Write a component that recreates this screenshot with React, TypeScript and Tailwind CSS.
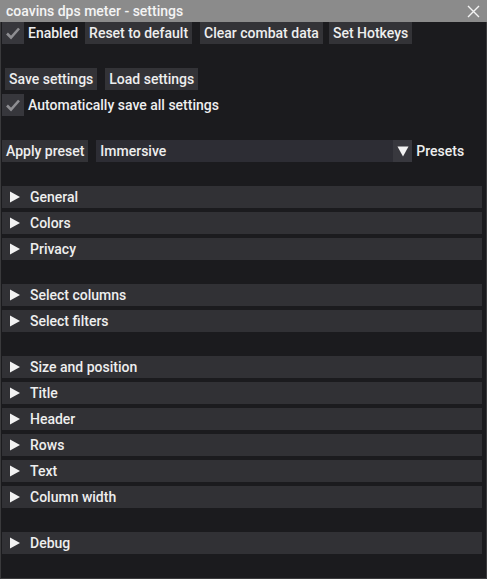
import React from "react";

const font = { fontFamily: "Roboto, 'Noto Sans', sans-serif" };

function Check() {
  return (
    <span className="w-[22px] h-[22px] bg-[#37373c] flex items-center justify-center shrink-0">
      <svg width="16" height="14" viewBox="0 0 16 14">
        <path d="M2 7.5 L6 11.5 L14 2.5" fill="none" stroke="#8e8e92" strokeWidth="2.6" />
      </svg>
    </span>
  );
}

function Btn({ children, className = "" }: { children: React.ReactNode; className?: string }) {
  return (
    <span className={`h-[22px] px-[4px] bg-[#333337] flex items-center whitespace-nowrap ${className}`}>
      {children}
    </span>
  );
}

function Header({ label }: { label: string }) {
  return (
    <div className="h-[22px] ml-[1px] mr-[4px] bg-[#313135] flex items-center">
      <svg width="12" height="12" viewBox="0 0 12 12" className="ml-[7px] mr-[9px]">
        <path d="M1 0.5 L11 6 L1 11.5 Z" fill="#f2f2f2" />
      </svg>
      <span>{label}</span>
    </div>
  );
}

const Spacer = () => <div className="h-4" />;

export default function App() {
  return (
    <div
      style={font}
      className="w-[487px] h-[579px] flex flex-col text-[14px] font-medium text-[#eeeeee] leading-none"
    >
      <div className="h-[22px] bg-[#8b8b8b] flex items-center justify-between pl-[6px] pr-[7px]">
        <span className="text-[#f4f4f4]">coavins dps meter - settings</span>
        <svg width="13" height="13" viewBox="0 0 13 13">
          <path d="M1 1 L12 12 M12 1 L1 12" stroke="#f4f4f4" strokeWidth="1.4" />
        </svg>
      </div>
      <div className="flex-1 bg-[#1b1b1e] border-x border-b border-[#3a3a3c] flex flex-col gap-1">
        <div className="flex items-center pl-[1px]">
          <Check />
          <span className="ml-[4px] mr-[7px]">Enabled</span>
          <Btn className="mr-[8px]">Reset to default</Btn>
          <Btn className="mr-[6px]">Clear combat data</Btn>
          <Btn>Set Hotkeys</Btn>
        </div>
        <Spacer />
        <div className="flex items-center pl-[4px]">
          <Btn className="mr-[8px]">Save settings</Btn>
          <Btn>Load settings</Btn>
        </div>
        <div className="flex items-center pl-[1px]">
          <Check />
          <span className="ml-[4px]">Automatically save all settings</span>
        </div>
        <Spacer />
        <div className="flex items-center pl-[1px]">
          <Btn className="mr-[8px]">Apply preset</Btn>
          <div className="w-[316px] h-[22px] bg-[#2d2d34] flex items-center">
            <span className="flex-1 pl-[4px]">Immersive</span>
            <span className="w-[19px] h-[22px] bg-[#38383e] flex items-center justify-center">
              <svg width="12" height="11" viewBox="0 0 12 11">
                <path d="M0.5 0.5 L11.5 0.5 L6 10.5 Z" fill="#f2f2f2" />
              </svg>
            </span>
          </div>
          <span className="ml-[4px]">Presets</span>
        </div>
        <Spacer />
        <Header label="General" />
        <Header label="Colors" />
        <Header label="Privacy" />
        <Spacer />
        <Header label="Select columns" />
        <Header label="Select filters" />
        <Spacer />
        <Header label="Size and position" />
        <Header label="Title" />
        <Header label="Header" />
        <Header label="Rows" />
        <Header label="Text" />
        <Header label="Column width" />
        <Spacer />
        <Header label="Debug" />
      </div>
    </div>
  );
}
